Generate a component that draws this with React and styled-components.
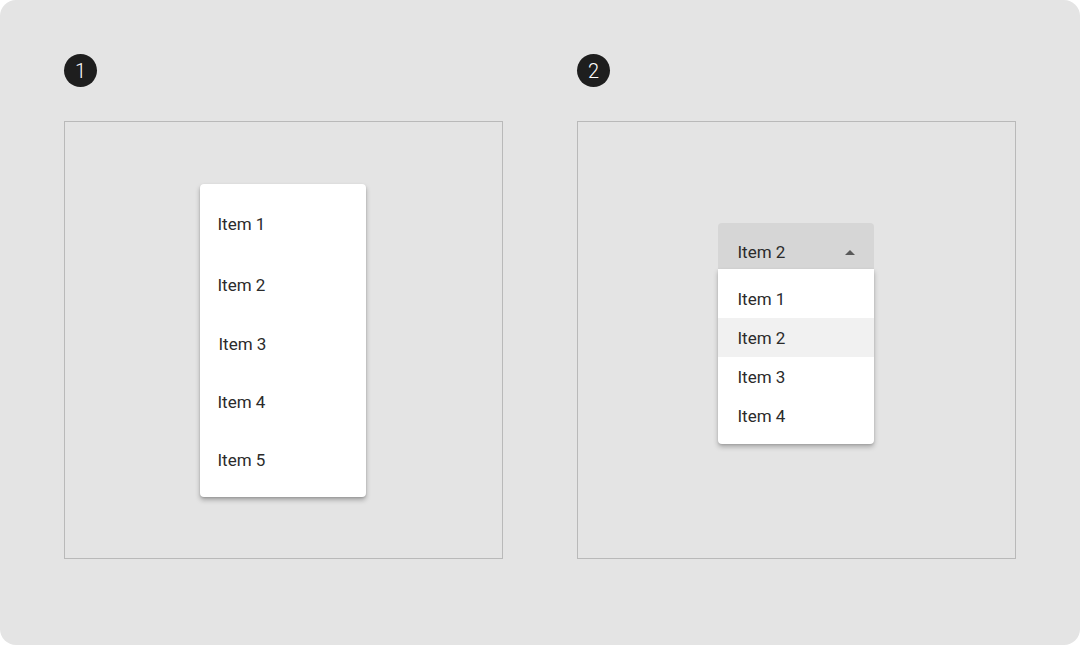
import styled, { createGlobalStyle } from "styled-components";

const GlobalStyle = createGlobalStyle`
  html, body {
    margin: 0;
    padding: 0;
    background: #ffffff;
  }
  body {
    font-family: Roboto, "Liberation Sans", sans-serif;
  }
`;

const Page = styled.div`
  width: 1080px;
  height: 645px;
  box-sizing: border-box;
  background: #e4e4e4;
  border-radius: 16px;
  padding: 54px 65px 0 64px;
  display: grid;
  grid-template-columns: 439px 439px;
  column-gap: 74px;
`;

const Column = styled.div`
  display: flex;
  flex-direction: column;
`;

const Badge = styled.div`
  width: 33px;
  height: 33px;
  border-radius: 50%;
  background: #1e1e1e;
  color: #ffffff;
  display: flex;
  align-items: center;
  justify-content: center;
  font-size: 20px;
  font-weight: 300;
  margin-bottom: 34px;
`;

const Frame = styled.div`
  width: 439px;
  height: 438px;
  box-sizing: border-box;
  border: 1px solid #b9b9b9;
  display: flex;
  justify-content: center;
  align-items: ${(p) => (p.$top ? "flex-start" : "center")};
  padding-top: ${(p) => (p.$top ? "101px" : "0")};
  padding-right: 2px;
`;

const Menu = styled.div`
  width: 166px;
  box-sizing: border-box;
  background: #ffffff;
  border-radius: 4px;
  padding: 10px 0 8px;
  box-shadow: 0 3px 5px rgba(0, 0, 0, 0.28), 0 1px 2px rgba(0, 0, 0, 0.12);
`;

const MenuItem = styled.div`
  height: ${(p) => p.$h}px;
  display: flex;
  align-items: center;
  padding-left: ${(p) => 18 + (p.$shift || 0)}px;
  font-size: 17px;
  color: #2b2b2b;
`;

const Select = styled.div`
  width: 156px;
  display: flex;
  flex-direction: column;
`;

const Field = styled.div`
  height: 47px;
  box-sizing: border-box;
  background: #d6d6d6;
  border-radius: 4px 4px 0 0;
  display: flex;
  align-items: center;
  justify-content: space-between;
  padding: 11px 17px 0 20px;
  font-size: 17px;
  color: #2b2b2b;
`;

const Caret = styled.svg`
  width: 14px;
  height: 7px;
  margin-top: 1px;
`;

const List = styled.div`
  background: #ffffff;
  border-radius: 0 0 4px 4px;
  margin-top: -1px;
  padding: 10px 0 9px;
  box-shadow: 0 3px 5px rgba(0, 0, 0, 0.25), 0 1px 2px rgba(0, 0, 0, 0.1);
`;

const Option = styled.div`
  height: 39px;
  display: flex;
  align-items: center;
  padding-left: 20px;
  font-size: 17px;
  color: #2b2b2b;
  background: ${(p) => (p.$active ? "#f1f1f1" : "transparent")};
`;

const menuItems = [
  { label: "Item 1", h: 61 },
  { label: "Item 2", h: 61 },
  { label: "Item 3", h: 57, shift: 1 },
  { label: "Item 4", h: 58 },
  { label: "Item 5", h: 58 },
];

const options = ["Item 1", "Item 2", "Item 3", "Item 4"];

export default function App() {
  return (
    <>
      <GlobalStyle />
      <Page>
        <Column>
          <Badge>1</Badge>
          <Frame>
            <Menu>
              {menuItems.map((it) => (
                <MenuItem key={it.label} $h={it.h} $shift={it.shift}>
                  {it.label}
                </MenuItem>
              ))}
            </Menu>
          </Frame>
        </Column>
        <Column>
          <Badge>2</Badge>
          <Frame $top>
            <Select>
              <Field>
                <span>Item 2</span>
                <Caret viewBox="0 0 14 7">
                  <path d="M2 6 L7 1 L12 6 Z" fill="#5a5a5a" />
                </Caret>
              </Field>
              <List>
                {options.map((o) => (
                  <Option key={o} $active={o === "Item 2"}>
                    {o}
                  </Option>
                ))}
              </List>
            </Select>
          </Frame>
        </Column>
      </Page>
    </>
  );
}
